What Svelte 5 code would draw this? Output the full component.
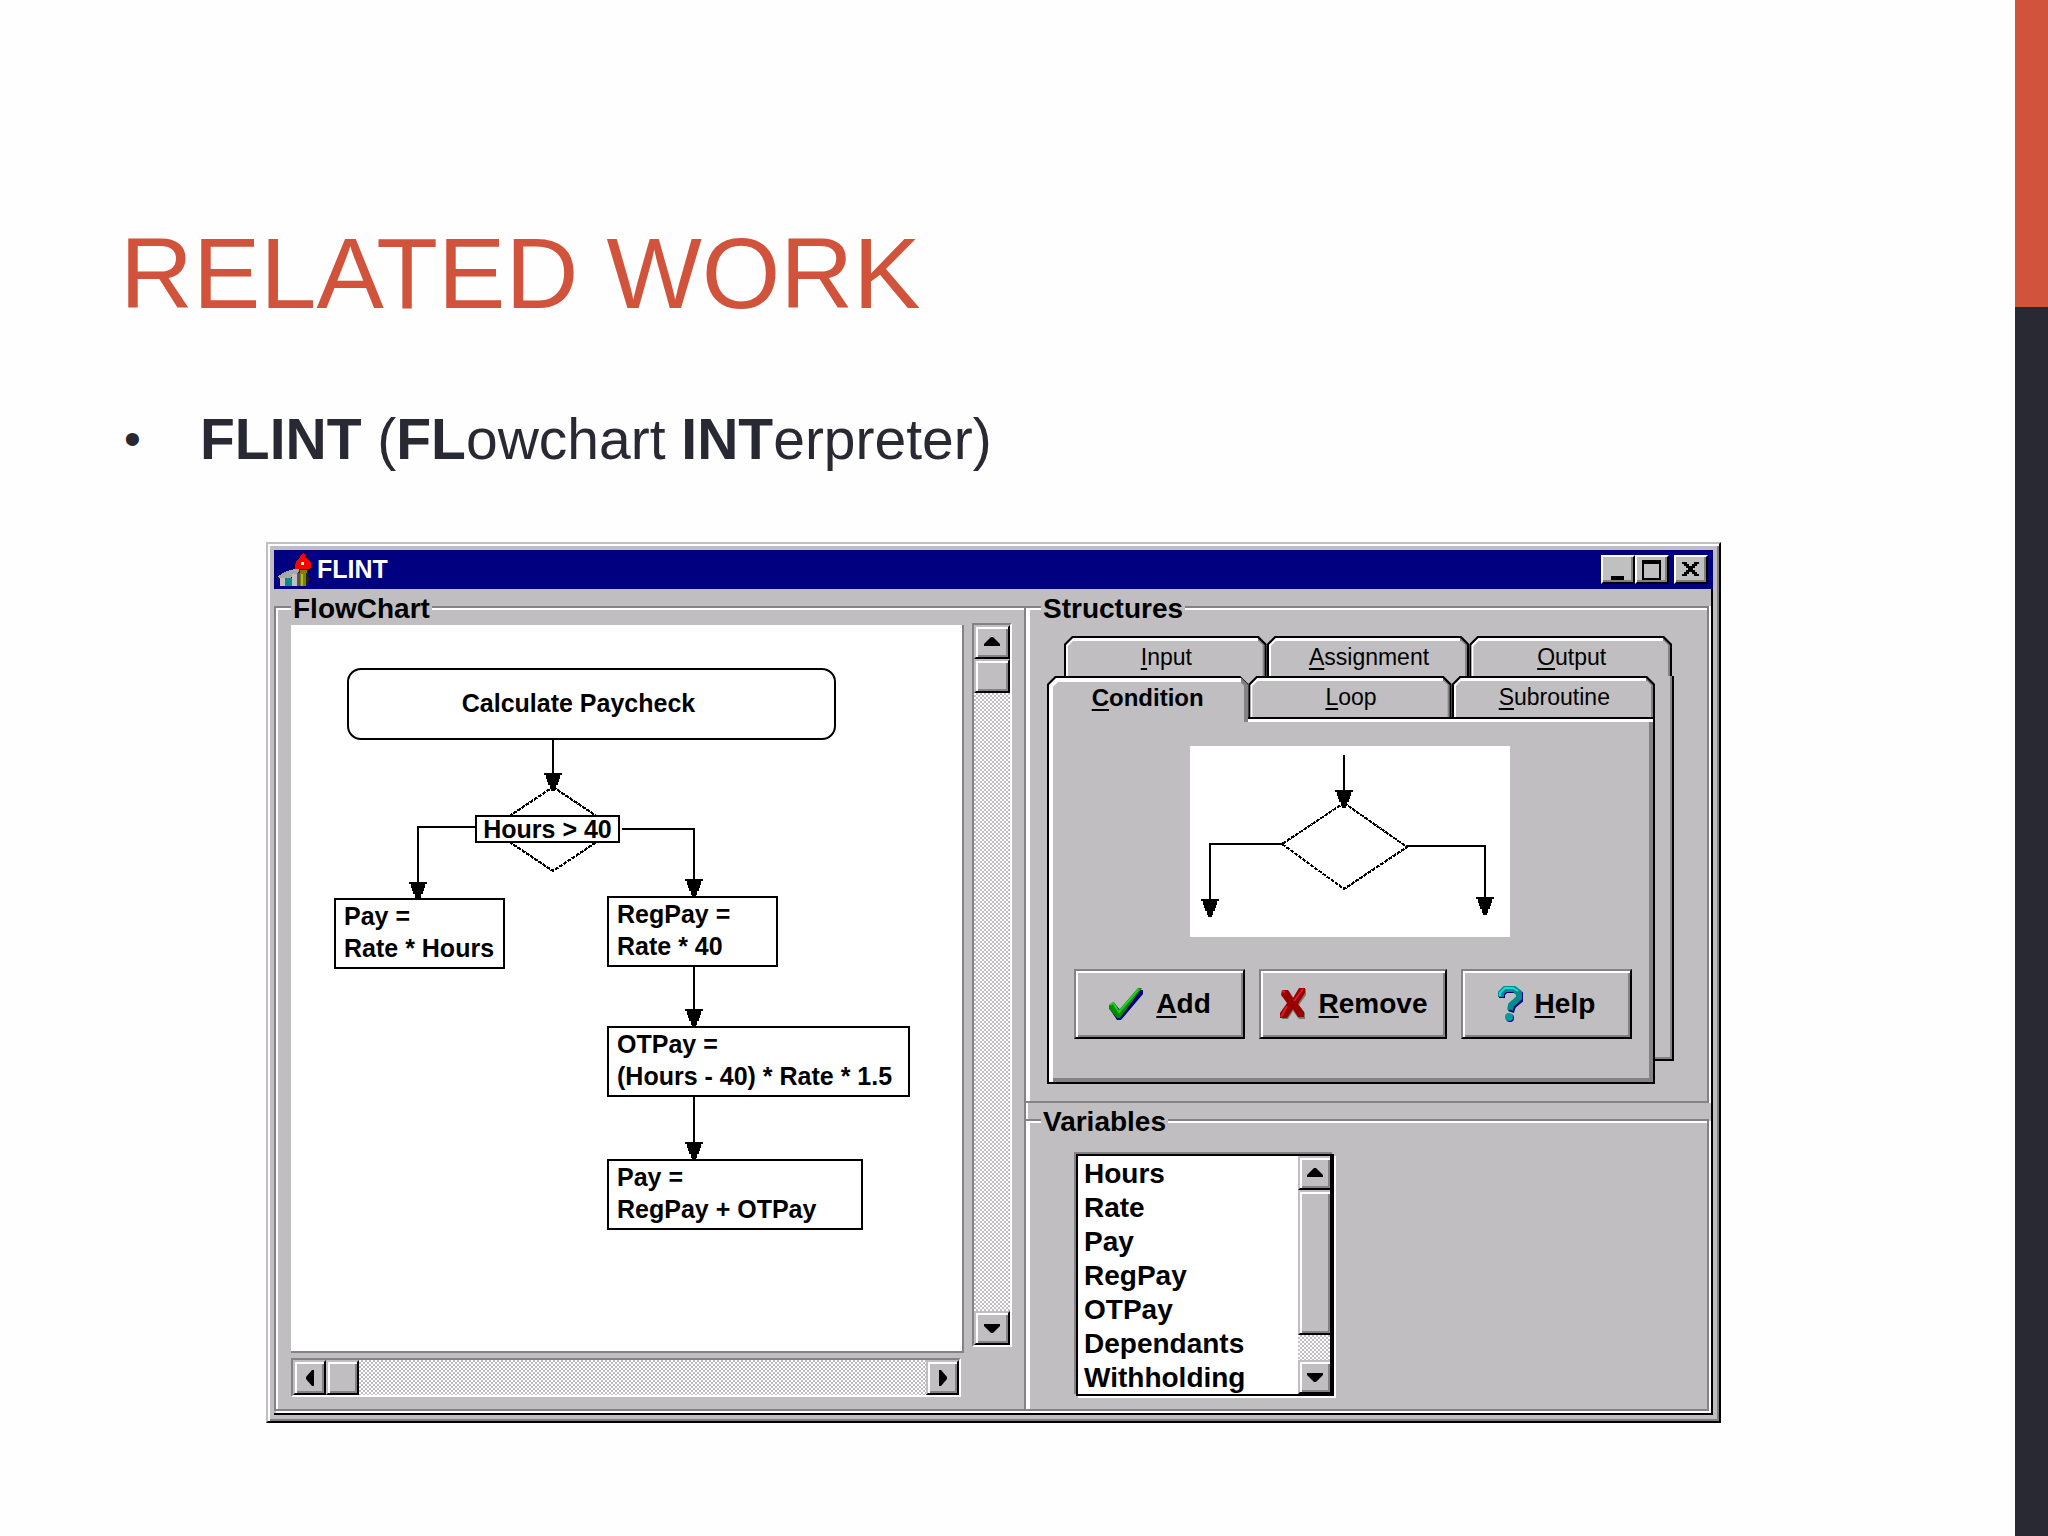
<script>
    const boxes = [
        { left: 43, top: 273, width: 171, lines: ["Pay =", "Rate * Hours"] },
        { left: 316, top: 271, width: 171, lines: ["RegPay =", "Rate * 40"] },
        { left: 316, top: 401, width: 303, lines: ["OTPay =", "(Hours - 40) * Rate * 1.5"] },
        { left: 316, top: 534, width: 256, lines: ["Pay =", "RegPay + OTPay"] },
    ];

    // arrow tips inside the flowchart, x is the centre and y the wide edge
    const chartHeads = [
        [262, 148],
        [127, 257],
        [403, 254],
        [403, 384],
        [403, 517],
    ];
    const previewHeads = [
        [154, 44],
        [20, 153],
        [295, 151],
    ];

    const backTabs = ["Input", "Assignment", "Output"];
    const frontTabs = ["Condition", "Loop", "Subroutine"];
    const variables = ["Hours", "Rate", "Pay", "RegPay", "OTPay", "Dependants", "Withholding"];

    let activeTab = $state("Condition");
    let selected = $state("");
</script>

{#snippet arrowHead(x, y)}
    <path d="M{x - 9} {y}h18v2h-2v4h-1v3h-1v3h-2v4h-1v2h-4v-2h-1v-4h-2v-3h-1v-3h-1v-4h-2z" fill="#000" />
{/snippet}

{#snippet hotkey(label)}
    <span class="caption"><u>{label[0]}</u>{label.slice(1)}</span>
{/snippet}

{#snippet tab(label)}
    <button
        type="button"
        role="tab"
        class="tab"
        class:active={activeTab === label}
        aria-selected={activeTab === label}
        onclick={() => (activeTab = label)}
    >
        {@render hotkey(label)}
    </button>
{/snippet}

{#snippet scrollButton(name, points)}
    <button type="button" class="scroll-button" aria-label={name}>
        <svg width="16" height="16" viewBox="0 0 16 16"><polygon {points} /></svg>
    </button>
{/snippet}

<div class="slide">
    <main>
        <h1>RELATED WORK</h1>
        <ul class="bullets">
            <li><b>FLINT</b> (<b>FL</b>owchart <b>INT</b>erpreter)</li>
        </ul>

        <div class="window">
            <header class="titlebar">
                <svg class="app-icon" width="36" height="36" viewBox="0 0 36 36" shape-rendering="crispEdges">
                    <path d="M17 16l1-5 3-4 3-2 2-5 3 5 5 6 1 5-3 3h-11z" fill="#200" />
                    <path d="M18 15l1-6 4-4 4-5 2 6 5 4v6l-4 2h-11z" fill="#f00" />
                    <path d="M24 10h3v3h-3z" fill="#ff8" />
                    <path d="M1 25l10-6 8-2h12v4l2 6-3 7H3v-7H1z" fill="#222" />
                    <path d="M1 24l9-5 8-2h4v3l-4 3-5 3H2z" fill="#a8a8a8" />
                    <path d="M3 26h5v8H3zM15 22h5v12h-5z" fill="#c0c0c0" />
                    <path d="M8 26h7v8H8z" fill="#0a8a8c" />
                    <path d="M23 18h7v3h-1v13h-6z" fill="#808000" />
                    <path d="M20 21h3v13h-3z" fill="#555" />
                    <path d="M24 22h2v12h-2z" fill="#b5b52a" />
                </svg>
                <span class="titlebar-text">FLINT</span>
                <button type="button" class="caption-button" aria-label="Minimize">
                    <svg width="24" height="22" viewBox="0 0 24 22"><path d="M5 17h13v4H5z" /></svg>
                </button>
                <button type="button" class="caption-button" aria-label="Maximize">
                    <svg width="24" height="22" viewBox="0 0 24 22">
                        <path d="M2 1h19v20H2zM4 5v14h15V5z" fill-rule="evenodd" />
                    </svg>
                </button>
                <button type="button" class="caption-button close" aria-label="Close">
                    <svg width="24" height="22" viewBox="0 0 24 22">
                        <path d="M3 3h5v2h2v2h3V5h2V3h5v2h-2v2h-2v2h-2v2h2v2h2v2h2v2h-5v-2h-2v-2h-3v2H8v2H3v-2h2v-2h2v-2h2V9H7V7H5V5H3z" />
                    </svg>
                </button>
            </header>

            <div class="body">
                <section class="group flowchart">
                    <h2>FlowChart</h2>
                    <div class="chart-area">
                        <div class="canvas">
                            <svg class="lines" width="671" height="726" viewBox="0 0 671 726" shape-rendering="crispEdges">
                                <g fill="none" stroke="#000" stroke-width="2">
                                    <path d="M262 115v40M184 202h-57v60M331 204h72v54M403 342v50M403 472v54" />
                                    <path d="M262 162l63 42-63 42-63-42z" stroke-dasharray="4 1" />
                                </g>
                                {#each chartHeads as [x, y]}
                                    {@render arrowHead(x, y)}
                                {/each}
                            </svg>
                            <div class="node start">Calculate Paycheck</div>
                            <div class="node decision">Hours &gt; 40</div>
                            {#each boxes as box}
                                <div
                                    class="node box"
                                    style="left: {box.left}px; top: {box.top}px; width: {box.width}px"
                                >
                                    {#each box.lines as line}
                                        <div>{line}</div>
                                    {/each}
                                </div>
                            {/each}
                        </div>
                        <div class="scrollbar vertical">
                            {@render scrollButton("Scroll up", "0,12 0,10 7,3 9,3 16,10 16,12")}
                            <div class="thumb"></div>
                            <div class="track"></div>
                            {@render scrollButton("Scroll down", "0,4 16,4 16,6 9,13 7,13 0,6")}
                        </div>
                        <div class="scrollbar horizontal">
                            {@render scrollButton("Scroll left", "12,0 10,0 4,7 4,9 10,16 12,16")}
                            <div class="thumb"></div>
                            <div class="track"></div>
                            {@render scrollButton("Scroll right", "4,0 6,0 12,7 12,9 6,16 4,16")}
                        </div>
                    </div>
                </section>

                <div class="side">
                    <section class="group structures">
                        <h2>Structures</h2>
                        <div class="notebook">
                            <div class="back-page"></div>
                            <div class="tab-row back" role="tablist">
                                {#each backTabs as label}
                                    {@render tab(label)}
                                {/each}
                            </div>
                            <div class="tab-row front" role="tablist">
                                {#each frontTabs as label}
                                    {@render tab(label)}
                                {/each}
                            </div>
                            <div class="page">
                                <svg class="preview" width="320" height="191" viewBox="0 0 320 191" shape-rendering="crispEdges">
                                    <rect width="320" height="191" fill="#fff" />
                                    <g fill="none" stroke="#000" stroke-width="2">
                                        <path d="M154 9v40M93 98H20v60M217 100h78v56" />
                                        <path d="M154 57l63 44-63 42-62-45z" stroke-dasharray="4 1" />
                                    </g>
                                    {#each previewHeads as [x, y]}
                                        {@render arrowHead(x, y)}
                                    {/each}
                                </svg>
                                <div class="actions">
                                    <button type="button" class="action">
                                        <svg width="36" height="34" viewBox="0 0 36 34">
                                            <path d="M3 20l4-3 6 7L31 3h4v4L13 33H9L3 24z" fill="#00007c" />
                                            <path d="M1 18l5-3 5 8L30 1h4L12 31H9L1 22z" fill="#008a00" />
                                            <path d="M2 18l3-2 6 9L31 2" fill="none" stroke="#1fd01f" stroke-width="2" />
                                        </svg>
                                        {@render hotkey("Add")}
                                    </button>
                                    <button type="button" class="action wide">
                                        <svg width="28" height="34" viewBox="0 0 28 34">
                                            <path d="M4 4h6l5 8 6-10h6v6l-7 10 6 8v6h-6l-6-8-5 8H3v-5l7-11-6-8z" fill="#777" />
                                            <path d="M3 3h6l5 8 6-10h6v5l-7 11 6 8v5h-6l-5-8-6 9H1v-5l7-10-6-8z" fill="#900" />
                                            <path d="M3 4l3 1M24 2l-9 12M8 19L2 30" fill="none" stroke="#d8202a" stroke-width="2" />
                                        </svg>
                                        {@render hotkey("Remove")}
                                    </button>
                                    <button type="button" class="action">
                                        <svg width="25" height="38" viewBox="0 0 25 38">
                                            <g fill="none" stroke-width="6">
                                                <path d="M4 13V9l4-4h9l5 4v6l-7 6-2 6" stroke="#00007c" />
                                                <path d="M3 12V8l4-4h9l5 4v5l-8 7-1 5" stroke="#008c90" />
                                                <path d="M2 11V8l5-5h8l5 3" stroke="#18d8dc" stroke-width="2" />
                                            </g>
                                            <circle cx="12" cy="33" r="4" fill="#00007c" />
                                            <circle cx="11" cy="32" r="4" fill="#009ca0" />
                                        </svg>
                                        {@render hotkey("Help")}
                                    </button>
                                </div>
                            </div>
                        </div>
                    </section>

                    <section class="group variables">
                        <h2 id="variables-label">Variables</h2>
                        <div class="listbox">
                            <select size="7" aria-labelledby="variables-label" bind:value={selected}>
                                {#each variables as name}
                                    <option value={name}>{name}</option>
                                {/each}
                            </select>
                            <div class="scrollbar vertical plain">
                                {@render scrollButton("Scroll up", "0,12 0,10 7,3 9,3 16,10 16,12")}
                                <div class="thumb long"></div>
                                <div class="track"></div>
                                {@render scrollButton("Scroll down", "0,4 16,4 16,6 9,13 7,13 0,6")}
                            </div>
                        </div>
                    </section>
                </div>
            </div>
        </div>
    </main>
    <aside><div class="accent"></div></aside>
</div>

<style>
    :global(body) {
        margin: 0;
        background: #fefefe;
    }
    .slide {
        display: flex;
        min-height: 100vh;
        font-family: "Liberation Sans", Arial, sans-serif;
        color: #000;
    }
    main {
        flex: 1;
        box-sizing: border-box;
        padding: 213px 294px 48px 120px;
    }
    aside {
        width: 33px;
        background: #292934;
    }
    .accent {
        height: 307px;
        background: #d2533c;
    }
    h1 {
        margin: 0;
        font-size: 101px;
        line-height: 120px;
        font-weight: 400;
        color: #d2533c;
    }
    .bullets {
        margin: 74px 0 71px;
        padding: 0;
        list-style: none;
        font-size: 57px;
        line-height: 64px;
        color: #292934;
    }
    .bullets li {
        display: block;
        padding-left: 80px;
    }
    .bullets li::before {
        content: "•";
        float: left;
        margin-left: -76px;
        font-size: 48px;
    }

    /* window frame */
    .window {
        margin-left: 146px;
        padding: 6px;
        border: 2px solid #c3bec3;
        border-right-color: #000;
        border-bottom-color: #000;
        background: #c0bec1;
        box-shadow: inset 2px 2px 0 #fff, inset -2px -2px 0 #808080;
    }
    .titlebar {
        display: flex;
        align-items: center;
        height: 39px;
        padding: 0 5px 0 3px;
        background: #000080;
    }
    .titlebar-text {
        flex: 1;
        padding-left: 4px;
        font-size: 25px;
        font-weight: 700;
        color: #fff;
    }
    button {
        margin: 0;
        padding: 0;
        border: 0;
        border-radius: 0;
        font-family: inherit;
        color: #000;
        background: #c0bec1;
    }
    .caption-button {
        display: flex;
        align-items: center;
        justify-content: center;
        width: 34px;
        height: 29px;
        border: 2px solid #fff;
        border-right-color: #000;
        border-bottom-color: #000;
        background: #c0c0c0;
        box-shadow: inset -2px -2px 0 #808080;
    }
    .caption-button.close {
        margin-left: 5px;
    }
    .body {
        display: grid;
        grid-template-columns: 752fr 683fr;
        padding: 17px 2px 2px 0;
        border-right: 2px solid #000;
        border-bottom: 2px solid #000;
    }

    /* etched group boxes */
    .group {
        border: 2px solid #848284;
        box-shadow: inset 2px 2px 0 #fff, 2px 2px 0 #fff;
    }
    .side .group {
        border-left: 0;
        box-shadow: inset 4px 2px 0 #fff, 2px 0 0 #fff;
    }
    .side .variables {
        box-shadow: inset 4px 2px 0 #fff, 2px 2px 0 #fff;
    }
    h2 {
        width: fit-content;
        margin: -13px 0 0 15px;
        padding: 0 2px;
        font-size: 28px;
        line-height: 28px;
        font-weight: 700;
        background: #c0bec1;
    }
    .side {
        display: flex;
        flex-direction: column;
        gap: 16px;
    }
    .variables {
        flex: 1;
    }

    /* flowchart */
    .chart-area {
        display: grid;
        grid-template-columns: 1fr 40px;
        column-gap: 8px;
        row-gap: 5px;
        padding: 0 12px 12px 15px;
    }
    .canvas {
        position: relative;
        height: 726px;
        margin-top: 2px;
        background: #fff;
        border-right: 2px solid #848284;
        border-bottom: 2px solid #848284;
    }
    .lines {
        position: absolute;
        left: 0;
        top: 0;
    }
    .node {
        position: absolute;
        box-sizing: border-box;
        border: 2px solid #000;
        background: #fff;
        font-size: 25px;
        line-height: 32px;
        font-weight: 700;
        white-space: nowrap;
    }
    .start {
        left: 56px;
        top: 43px;
        width: 489px;
        height: 72px;
        padding: 17px 26px 0 0;
        border-radius: 14px;
        text-align: center;
    }
    .decision {
        left: 184px;
        top: 190px;
        width: 145px;
        height: 28px;
        line-height: 24px;
        text-align: center;
    }
    .box {
        height: 71px;
        padding: 0 0 0 8px;
    }

    /* scrollbars */
    .scrollbar {
        display: flex;
        box-sizing: border-box;
        border: 2px solid #848284;
        border-right-color: #fff;
        border-bottom-color: #fff;
    }
    .vertical {
        flex-direction: column;
        margin-bottom: 6px;
    }
    .horizontal {
        height: 39px;
        margin-right: 3px;
    }
    .track {
        flex: 1;
        background: repeating-conic-gradient(#c0bec1 0 25%, #fff 0 50%) 0 0 / 4px 4px;
    }
    .scroll-button,
    .thumb {
        display: flex;
        flex: none;
        align-items: center;
        justify-content: center;
        box-sizing: border-box;
        width: 33px;
        height: 34px;
        border: 2px solid #c0bec1;
        border-right-color: #000;
        border-bottom-color: #000;
        background: #c0bec1;
        box-shadow: inset 2px 2px 0 #fff, inset -2px -2px 0 #848284;
    }
    .vertical .scroll-button,
    .vertical .thumb {
        width: 100%;
    }
    .horizontal .scroll-button,
    .horizontal .thumb {
        height: 100%;
    }

    /* tabbed notebook */
    .notebook {
        position: relative;
        margin: 13px 33px 17px 21px;
    }
    .back-page {
        position: absolute;
        top: 40px;
        right: 0;
        bottom: 23px;
        left: 17px;
        border-right: 2px solid #000;
        border-bottom: 2px solid #000;
        box-shadow: inset -2px -2px 0 #848284;
    }
    .tab-row {
        position: relative;
        display: flex;
    }
    .back {
        height: 40px;
        margin: 0 2px 0 17px;
    }
    .front {
        height: 41px;
        margin-right: 19px;
        z-index: 1;
    }
    .tab {
        position: relative;
        flex: 1;
        height: 100%;
        padding: 2px 0 0 2px;
        background: #000;
        font-size: 23px;
        clip-path: polygon(0 100%, 0 8px, 8px 0, calc(100% - 8px) 0, 100% 8px, 100% 100%);
    }
    .tab::before,
    .tab::after {
        content: "";
        position: absolute;
        inset: 2px 2px 0;
        background: linear-gradient(to right, #fff calc(100% - 7px), #848284 0);
        clip-path: polygon(0 100%, 0 7px, 7px 0, calc(100% - 7px) 0, 100% 7px, 100% 100%);
    }
    .tab::after {
        inset: 5px 4px 0;
        background: #c0bec1;
        clip-path: polygon(0 100%, 0 5px, 5px 0, calc(100% - 4px) 0, 100% 4px, 100% 100%);
    }
    .tab .caption {
        position: relative;
        z-index: 1;
    }
    .tab.active {
        height: 46px;
        padding: 0 0 3px;
        font-size: 24px;
        font-weight: 700;
    }
    .tab.active::before {
        inset: 2px 0 0 2px;
    }
    .tab.active::after {
        inset: 6px 4px 0 6px;
    }
    u {
        text-decoration-thickness: 2px;
        text-underline-offset: 3px;
        text-decoration-skip-ink: none;
    }
    .page {
        position: relative;
        display: flex;
        flex-direction: column;
        gap: 32px;
        margin-right: 19px;
        padding: 27px 21px 43px 25px;
        border: 2px solid #000;
        background: #c0bec1;
        box-shadow: inset 4px 3px 0 #fff, inset -4px -4px 0 #848284;
    }
    .preview {
        align-self: center;
        margin-right: 6px;
    }
    .actions {
        display: flex;
        gap: 14px;
    }
    .action {
        display: flex;
        flex: 171 1 0;
        align-items: center;
        justify-content: center;
        gap: 12px;
        box-sizing: border-box;
        height: 70px;
        border: 2px solid #848284;
        border-right-color: #000;
        border-bottom-color: #000;
        font-size: 28px;
        font-weight: 700;
        box-shadow: inset 2px 2px 0 #fff, inset -2px -2px 0 #848284;
    }
    .action.wide {
        flex-grow: 188;
    }

    /* variable list */
    .listbox {
        display: flex;
        box-sizing: border-box;
        width: 258px;
        height: 242px;
        margin: 18px 0 12px 50px;
        border: 2px solid #000;
        border-right-width: 4px;
        background: #fff;
        box-shadow: -2px -2px 0 #848284, 2px 2px 0 #fff;
    }
    select {
        flex: 1;
        min-width: 0;
        height: 238px;
        margin: 0;
        padding: 2px 0 0 6px;
        box-sizing: border-box;
        border: 0;
        outline: 0;
        appearance: none;
        overflow: hidden;
        background: #fff;
        color: #000;
        font-family: inherit;
        font-size: 28px;
    }
    option {
        min-height: 34px;
        padding: 0;
        line-height: 34px;
        font-weight: 700;
    }
    .plain {
        width: 32px;
        margin: 0;
        border: 0;
    }
    .plain .scroll-button,
    .plain .thumb {
        border-right: 0;
    }
    .thumb.long,
    .plain .thumb.long {
        height: 145px;
    }
</style>
